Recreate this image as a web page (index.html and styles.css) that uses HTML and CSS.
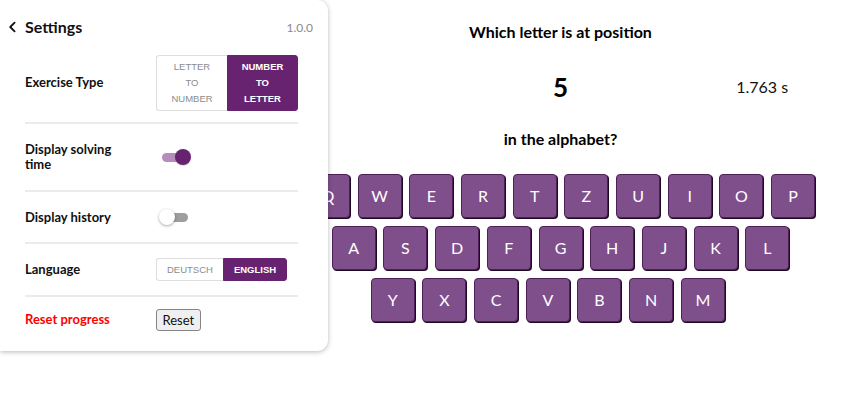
FILE: index.html
```html
<!DOCTYPE html>
<html lang="en">
<head>
<meta charset="utf-8">
<title>Alphabet trainer</title>
<link rel="stylesheet" href="styles.css">
</head>
<body>
<main class="main">
  <h1 class="question q-first">Which letter is at position</h1>
  <div class="number-row">
    <span></span>
    <span class="number">5</span>
    <span class="time">1.763 s</span>
  </div>
  <h2 class="question">in the alphabet?</h2>
  <div class="keyboard">
    <div class="key-row">
      <button class="key">Q</button><button class="key">W</button><button class="key">E</button><button class="key">R</button><button class="key">T</button><button class="key">Z</button><button class="key">U</button><button class="key">I</button><button class="key">O</button><button class="key">P</button>
    </div>
    <div class="key-row">
      <button class="key">A</button><button class="key">S</button><button class="key">D</button><button class="key">F</button><button class="key">G</button><button class="key">H</button><button class="key">J</button><button class="key">K</button><button class="key">L</button>
    </div>
    <div class="key-row key-row-last">
      <button class="key">Y</button><button class="key">X</button><button class="key">C</button><button class="key">V</button><button class="key">B</button><button class="key">N</button><button class="key">M</button>
    </div>
  </div>
</main>

<aside class="panel">
  <div class="panel-header">
    <div class="title">
      <svg class="back" viewBox="0 0 10 12" width="10" height="12"><path d="M6.6 1.6 L2.2 6 L6.6 10.4" fill="none" stroke="#111" stroke-width="1.8" stroke-linecap="round" stroke-linejoin="round"/></svg>
      <span>Settings</span>
    </div>
    <span class="version">1.0.0</span>
  </div>
  <div class="settings">
    <div class="row row-exercise">
      <div class="label">Exercise Type</div>
      <div class="seg seg-stack">
        <span class="seg-btn">Letter<br>to<br>number</span>
        <span class="seg-btn active">Number<br>to<br>letter</span>
      </div>
    </div>
    <div class="row row-time">
      <div class="label">Display solving time</div>
      <div class="toggle on"><span class="track"></span><span class="thumb"></span></div>
    </div>
    <div class="row">
      <div class="label">Display history</div>
      <div class="toggle"><span class="track"></span><span class="thumb"></span></div>
    </div>
    <div class="row row-lang">
      <div class="label">Language</div>
      <div class="seg seg-inline">
        <span class="seg-btn">Deutsch</span>
        <span class="seg-btn active">English</span>
      </div>
    </div>
    <div class="row row-reset">
      <div class="label label-danger">Reset progress</div>
      <button class="reset-btn">Reset</button>
    </div>
  </div>
</aside>
</body>
</html>
```

FILE: styles.css
```css
html, body {
  margin: 0;
  padding: 0;
  background: #ffffff;
}

body {
  font-family: Lato, "Noto Sans", sans-serif;
  color: #111;
  width: 860px;
  height: 410px;
  overflow: hidden;
  position: relative;
}

/* ---------- main exercise area ---------- */
.main {
  margin-left: 261px;
  width: 599px;
  padding-top: 22px;
  text-align: center;
}

.question {
  margin: 0;
  font-size: 16px;
  font-weight: 700;
  line-height: 20px;
  color: #000;
}

.number-row {
  display: grid;
  grid-template-columns: 1fr 1fr 1fr;
  align-items: center;
  height: 36px;
  margin: 26.5px 0 24px;
}

.number {
  font-size: 26px;
  font-weight: 700;
  line-height: 36px;
  color: #000;
}

.time {
  font-size: 16px;
  color: #111;
  padding-left: 4px;
}

.keyboard {
  margin-top: 25.8px;
  display: flex;
  flex-direction: column;
  align-items: center;
  gap: 7.7px;
}

.key-row {
  display: flex;
  gap: 7.7px;
}

.key-row-last {
  margin-right: 25.4px;
}

.key {
  width: 44px;
  height: 44px;
  box-sizing: border-box;
  padding: 0;
  margin: 0;
  background: #7f4f8c;
  border: 1px solid #4f1f57;
  border-radius: 4px;
  box-shadow: 1px 1px 0 #1e0a22;
  color: #fff;
  font-family: Lato, "Noto Sans", sans-serif;
  font-size: 16px;
  line-height: 20px;
}

/* ---------- settings panel ---------- */
.panel {
  position: absolute;
  left: 0;
  top: 0;
  width: 328px;
  box-sizing: border-box;
  padding: 0 15px 8px 0;
  background: #fff;
  border-radius: 0 11px 11px 0;
  box-shadow: 0 1px 5px rgba(0, 0, 0, 0.28);
  z-index: 2;
}

.panel-header {
  display: flex;
  align-items: center;
  justify-content: space-between;
  height: 20px;
  padding: 17px 0 6px 8px;
}

.title {
  display: flex;
  align-items: center;
  font-size: 16px;
  font-weight: 700;
  line-height: 20px;
  color: #111;
}

.back {
  display: block;
  margin-right: 7px;
}

.version {
  font-size: 12px;
  color: #8a8a8a;
}

.settings {
  margin: 0 15px 0 25px;
}

.row {
  display: flex;
  align-items: center;
  min-height: 26px;
  padding: 12px 0;
  border-bottom: 2px solid #ebebeb;
}

.row-exercise {
  padding: 11.5px 0;
}

.row-time {
  padding: 16px 0;
  min-height: 34px;
}

.row-lang {
  min-height: 27px;
}

.row-reset {
  border-bottom: none;
  min-height: 0;
  padding: 11.5px 0;
}

.label {
  flex: 0 0 131px;
  box-sizing: border-box;
  padding-right: 20px;
  font-size: 13px;
  font-weight: 700;
  line-height: 15px;
  color: #111;
}

.label-danger {
  color: #ff0000;
}

/* segmented controls */
.seg {
  display: flex;
}

.seg-btn {
  box-sizing: border-box;
  font-family: "Liberation Sans", Arial, sans-serif;
  font-size: 9.5px;
  text-transform: uppercase;
  text-align: center;
  color: #8c8c8c;
  background: #fff;
  border: 1px solid #dedede;
}

.seg-btn:first-child {
  border-right: none;
  border-radius: 3px 0 0 3px;
}

.seg-btn:last-child {
  border-radius: 0 3px 3px 0;
}

.seg-btn.active {
  background: #67236f;
  border-color: #67236f;
  color: #fff;
  font-weight: 700;
}

.seg-stack .seg-btn {
  width: 71px;
  padding: 3px 0;
  line-height: 16px;
}

.seg-inline .seg-btn {
  padding: 0 10px;
  line-height: 21px;
}

/* toggles */
.toggle {
  position: relative;
  width: 32px;
  height: 16px;
  margin-left: 3px;
}

.track {
  position: absolute;
  left: 3px;
  right: 3px;
  top: 3.5px;
  height: 9px;
  border-radius: 5px;
  background: #9e9e9e;
}

.thumb {
  position: absolute;
  top: 0;
  left: 0;
  width: 16px;
  height: 16px;
  border-radius: 50%;
  background: #fff;
  box-shadow: 0 1px 3px rgba(0, 0, 0, 0.35);
}

.toggle.on .track {
  background: #b48cbd;
}

.toggle.on .thumb {
  left: 16px;
  background: #67236f;
  box-shadow: 0 1px 1px rgba(0, 0, 0, 0.15);
}

/* reset button */
.reset-btn {
  box-sizing: border-box;
  height: 22.5px;
  padding: 0 5.5px;
  font-family: Lato, "Noto Sans", sans-serif;
  font-size: 13px;
  line-height: 20px;
  color: #111;
  background: #efefef;
  border: 1px solid #858585;
  border-radius: 3px;
}
```
